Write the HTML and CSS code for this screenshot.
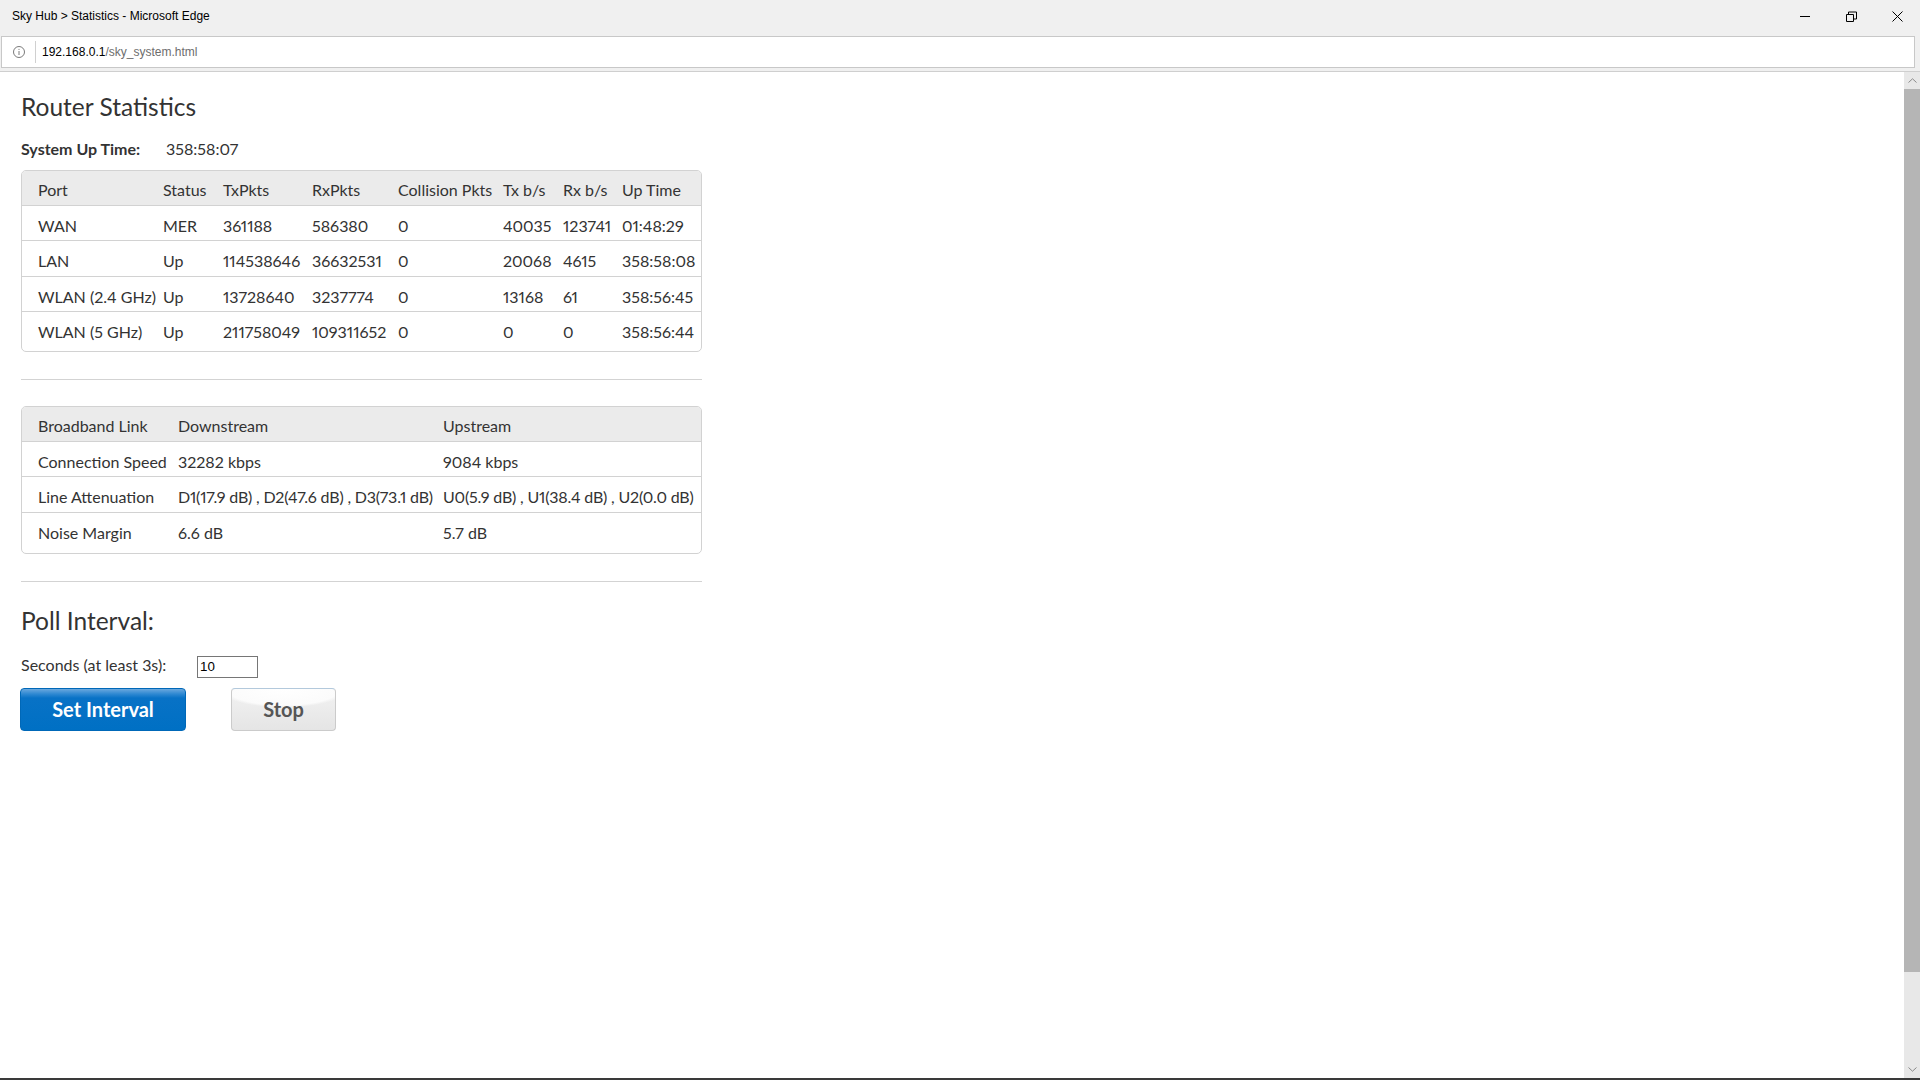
FILE: index.html
```html
<!DOCTYPE html>
<html lang="en">
  <head>
    <meta charset="UTF-8" />
    <title>Sky Hub &gt; Statistics</title>
    <link rel="stylesheet" href="styles.css">
  </head>
  <body>
    <div class="chrome">
      <div class="titlebar">
        <span class="title">Sky Hub &gt; Statistics - Microsoft Edge</span>
        <div class="controls">
          <div class="ctl">
            <svg width="10" height="10" viewBox="0 0 10 10"><path d="M0 5.5h10" stroke="#000" stroke-width="1" fill="none"/></svg>
          </div>
          <div class="ctl">
            <svg width="11" height="11" viewBox="0 0 11 11"><path d="M0.5 3.5h7v7h-7z M2.5 3.5v-2.5h8v7h-2.5" stroke="#000" stroke-width="1" fill="none"/></svg>
          </div>
          <div class="ctl">
            <svg width="11" height="11" viewBox="0 0 11 11"><path d="M0.5 0.5l10 10 M10.5 0.5l-10 10" stroke="#000" stroke-width="1" fill="none"/></svg>
          </div>
        </div>
      </div>
      <div class="addressbar">
        <span class="info">
          <svg width="12" height="12" viewBox="0 0 12 12"><circle cx="6" cy="6" r="5.5" stroke="#7a7a7a" stroke-width="1" fill="none"/><path d="M6 5v4" stroke="#7a7a7a" stroke-width="1"/><circle cx="6" cy="3.3" r="0.6" fill="#7a7a7a"/></svg>
        </span>
        <span class="url"><b>192.168.0.1</b>/sky_system.html</span>
      </div>
    </div>

    <div class="viewport">
      <div class="page">
        <h1>Router Statistics</h1>
        <div class="uptime">
          <span class="label">System Up Time:</span><span>358:58:07</span>
        </div>

        <div class="stats">
          <table>
            <colgroup>
              <col style="width:135px"><col style="width:60px"><col style="width:89px"><col style="width:86px">
              <col style="width:105px"><col style="width:60px"><col style="width:59px"><col style="width:85px">
            </colgroup>
            <tr class="head">
              <th>Port</th><th>Status</th><th>TxPkts</th><th>RxPkts</th><th>Collision Pkts</th><th>Tx b/s</th><th>Rx b/s</th><th>Up Time</th>
            </tr>
            <tr>
              <td>WAN</td><td>MER</td><td>361188</td><td>586380</td><td>0</td><td>40035</td><td>123741</td><td>01:48:29</td>
            </tr>
            <tr>
              <td>LAN</td><td>Up</td><td>114538646</td><td>36632531</td><td>0</td><td>20068</td><td>4615</td><td>358:58:08</td>
            </tr>
            <tr>
              <td>WLAN (2.4 GHz)</td><td>Up</td><td>13728640</td><td>3237774</td><td>0</td><td>13168</td><td>61</td><td>358:56:45</td>
            </tr>
            <tr>
              <td>WLAN (5 GHz)</td><td>Up</td><td>211758049</td><td>109311652</td><td>0</td><td>0</td><td>0</td><td>358:56:44</td>
            </tr>
          </table>
        </div>

        <hr class="rule rule-first">

        <div class="stats stats-link">
          <table>
            <colgroup>
              <col style="width:150px"><col style="width:265px"><col style="width:264px">
            </colgroup>
            <tr class="head">
              <th>Broadband Link</th><th>Downstream</th><th>Upstream</th>
            </tr>
            <tr>
              <td>Connection Speed</td><td>32282 kbps</td><td>9084 kbps</td>
            </tr>
            <tr>
              <td>Line Attenuation</td><td class="tight">D1(17.9 dB) , D2(47.6 dB) , D3(73.1 dB)</td><td class="tight">U0(5.9 dB) , U1(38.4 dB) , U2(0.0 dB)</td>
            </tr>
            <tr>
              <td>Noise Margin</td><td>6.6 dB</td><td>5.7 dB</td>
            </tr>
          </table>
        </div>

        <hr class="rule rule-second">

        <h2>Poll Interval:</h2>
        <div class="poll-row">
          <label for="poll">Seconds (at least 3s):</label>
          <input type="text" id="poll" value="10">
        </div>
        <div class="buttons">
          <button class="btn btn-primary">Set Interval</button>
          <button class="btn btn-secondary">Stop</button>
        </div>
      </div>

      <div class="scrollbar">
        <div class="sb-btn">
          <svg width="9" height="5" viewBox="0 0 9 5"><path d="M0.5 4.5L4.5 0.8L8.5 4.5" stroke="#8a8a8a" stroke-width="1" fill="none"/></svg>
        </div>
        <div class="sb-thumb"></div>
        <div class="sb-track"></div>
        <div class="sb-btn">
          <svg width="9" height="5" viewBox="0 0 9 5"><path d="M0.5 0.5L4.5 4.2L8.5 0.5" stroke="#8a8a8a" stroke-width="1" fill="none"/></svg>
        </div>
      </div>
    </div>
    <div class="edge"></div>
  </body>
</html>
```

FILE: styles.css
```css
* {
  box-sizing: border-box;
}
body {
  margin: 0;
  width: 1920px;
  height: 1080px;
  overflow: hidden;
  background: #fff;
  font-family: Lato, "Open Sans", sans-serif;
  font-variant-numeric: proportional-nums;
}

/* browser window */
.chrome {
  background: #f0f0f0;
  padding-bottom: 3px;
  border-bottom: 1px solid #cfcfcf;
}
.titlebar {
  height: 36px;
  display: flex;
  justify-content: space-between;
}
.title {
  font: 12px/14px "Liberation Sans", Arial, sans-serif;
  color: #000;
  padding: 9px 0 0 12px;
}
.controls {
  display: flex;
}
.ctl {
  width: 46px;
  height: 36px;
  display: flex;
  justify-content: center;
  padding-top: 11px;
}
.addressbar {
  height: 32px;
  margin: 0 5px 0 1px;
  background: #fff;
  border: 1px solid #c8c8c8;
  display: flex;
  align-items: center;
}
.info {
  width: 34px;
  height: 22px;
  display: flex;
  justify-content: center;
  align-items: center;
  border-right: 1px solid #d0d0d0;
}
.url {
  font: 12px/14px "Liberation Sans", Arial, sans-serif;
  color: #6d6d6d;
  padding-left: 6px;
}
.url b {
  font-weight: normal;
  color: #000;
}

.viewport {
  display: flex;
  height: 1006px;
}
.scrollbar {
  width: 16px;
  background: #e8e8e8;
  display: flex;
  flex-direction: column;
}
.sb-btn {
  height: 17px;
  display: flex;
  align-items: center;
  justify-content: center;
}
.sb-thumb {
  height: 883px;
  background: #b5b5b5;
}
.sb-track {
  flex: 1;
}
.edge {
  height: 2px;
  background: #3a3a3a;
}

/* page */
.page {
  flex: 1;
  padding: 21px 0 0 21px;
  color: #333;
}
h1,
h2 {
  font-size: 24.5px;
  font-weight: normal;
  line-height: 28.8px;
  margin: 0;
}
.uptime {
  margin-top: 17px;
  font-size: 16px;
  line-height: 1.2;
}
.uptime .label {
  display: inline-block;
  width: 145px;
  font-weight: bold;
}
.stats {
  width: 681px;
  margin-top: 12px;
  border: 1px solid #d2d2d2;
  border-radius: 5px;
  padding-bottom: 4px;
  overflow: hidden;
}
.stats-link {
  padding-bottom: 6px;
}
.stats-link tr {
  height: 36px;
}
.stats table {
  border-collapse: separate;
  border-spacing: 0;
  table-layout: fixed;
  width: 679px;
  font-size: 16px;
}
.stats th,
.stats td {
  text-align: left;
  font-weight: normal;
  padding: 4px 0 0 6px;
  white-space: nowrap;
  vertical-align: middle;
  border-bottom: 1px solid #d2d2d2;
}
.stats th:first-child,
.stats td:first-child {
  padding-left: 16px;
}
.stats td.tight {
  letter-spacing: -0.012em;
}
.stats th {
  background: #ebebeb;
}
.stats tr {
  height: 35.5px;
}
.stats tr.head {
  height: 35px;
}
.stats tr:last-child {
  height: 34.5px;
}
.stats tr:last-child td {
  border-bottom: none;
}
.rule {
  width: 681px;
  height: 1px;
  border: 0;
  background: #d3d3d3;
}
.rule-first {
  margin: 27px 0 26px;
}
.rule-first + .stats {
  margin-top: 0;
}
.rule-second {
  margin: 27px 0 24.5px;
}
.poll-row {
  display: flex;
  align-items: baseline;
  margin-top: 19.5px;
  font-size: 16px;
  line-height: 1.2;
}
.poll-row label {
  width: 176px;
}
.poll-row input {
  width: 61px;
  height: 22px;
  border: 1px solid #767676;
  border-radius: 0;
  padding: 0 2px;
  font: 13.33px "Liberation Sans", Arial, sans-serif;
  color: #000;
}
.buttons {
  display: flex;
  gap: 45px;
  margin: 10px 0 0 -1px;
}
.btn {
  height: 43px;
  border-radius: 4px;
  font: bold 20px Lato, sans-serif;
  padding: 0;
}
.btn-primary {
  width: 166px;
  color: #fff;
  border: 1px solid #0068b8;
  background: linear-gradient(#6aa8de 0, #2f89d2 12%, #0872c6 22%, #0070c4 100%);
}
.btn-secondary {
  width: 105px;
  color: #555;
  border: 1px solid #cbcbcb;
  border-top-color: #b3c9dc;
  background:
    radial-gradient(ellipse 62% 45% at 50% 0, #ffffff 0, #fbfbfb 88%, rgba(255, 255, 255, 0) 100%),
    linear-gradient(#f2f2f2, #e5e5e5);
}
```
